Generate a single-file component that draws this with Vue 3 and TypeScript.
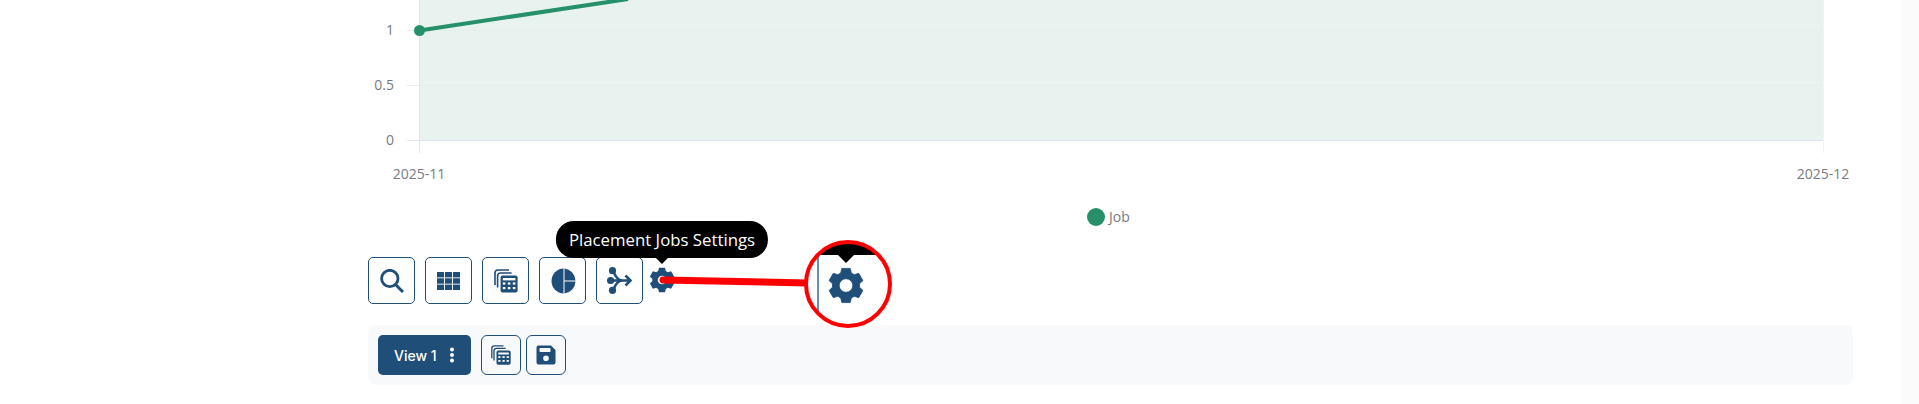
<script setup lang="ts">
function gearPath(cx: number, cy: number, outer: number, root: number, hole: number): string {
  const teeth = 6
  const pts: string[] = []
  const pt = (r: number, a: number) => `${(cx + r * Math.sin(a)).toFixed(2)} ${(cy - r * Math.cos(a)).toFixed(2)}`
  for (let i = 0; i < teeth; i++) {
    const c = (i * Math.PI * 2) / teeth
    pts.push(pt(root, c - 0.4), pt(outer, c - 0.24), pt(outer, c + 0.24), pt(root, c + 0.4))
  }
  const ring = `M${pts.join('L')}Z`
  const h = `M${cx - hole} ${cy}a${hole} ${hole} 0 1 0 ${hole * 2} 0a${hole} ${hole} 0 1 0 ${-hole * 2} 0Z`
  return ring + h
}
const smallGear = gearPath(13, 13, 12.6, 9.8, 4.3)
const bigGear = gearPath(846, 285.5, 17.6, 13.6, 6.8)
const buttons = ['search', 'grid', 'calc', 'pie', 'split']
</script>

<template>
  <div class="page">
    <main class="content">
      <section class="chart">
        <svg class="plot" width="1485" height="257" viewBox="0 0 1485 257">
          <rect x="51.5" y="0" width="1403.5" height="140.5" fill="#e8f2ee" />
          <g stroke="#e6eeeb" stroke-width="1">
            <line x1="39" x2="1455" y1="30.5" y2="30.5" />
            <line x1="39" x2="1455" y1="85.5" y2="85.5" />
          </g>
          <line x1="39" x2="1455" y1="140.5" y2="140.5" stroke="#e0e6f1" />
          <line x1="51.5" x2="51.5" y1="0" y2="153" stroke="#e0e6f1" />
          <line x1="1455.5" x2="1455.5" y1="0" y2="153" stroke="#f0f3f6" />
          <line x1="51.5" y1="30.5" x2="260" y2="-1" stroke="#25906a" stroke-width="4" />
          <circle cx="51.5" cy="30.5" r="5.5" fill="#25906a" />
          <g class="axis">
            <text x="26" y="35" text-anchor="end">1</text>
            <text x="26" y="90" text-anchor="end">0.5</text>
            <text x="26" y="145" text-anchor="end">0</text>
            <text x="51" y="179" text-anchor="middle">2025-11</text>
            <text x="1455" y="179" text-anchor="middle">2025-12</text>
            <text x="741" y="221.5">Job</text>
          </g>
          <circle cx="728" cy="217" r="9" fill="#25906a" />
        </svg>
      </section>

      <div class="toolbar">
        <button v-for="b in buttons" :key="b" class="tool" type="button">
          <svg v-if="b === 'search'" width="24" height="24" viewBox="0 0 24 24">
            <circle cx="9.8" cy="9.5" r="8.2" fill="none" stroke="#1f4e79" stroke-width="2.8" />
            <line x1="15.5" y1="15.5" x2="23" y2="23" stroke="#1f4e79" stroke-width="3" />
          </svg>
          <svg v-else-if="b === 'grid'" width="23" height="18" viewBox="0 0 23 18" fill="#1f4e79">
            <rect x="0" y="0" width="7" height="5.400" /><rect x="8" y="0" width="7" height="5.400" /><rect x="16" y="0" width="7" height="5.400" />
            <rect x="0" y="6.300" width="7" height="5.400" /><rect x="8" y="6.300" width="7" height="5.400" /><rect x="16" y="6.300" width="7" height="5.400" />
            <rect x="0" y="12.600" width="7" height="5.400" /><rect x="8" y="12.600" width="7" height="5.400" /><rect x="16" y="12.600" width="7" height="5.400" />
          </svg>
          <svg v-else-if="b === 'calc'" width="24" height="24" viewBox="0 0 24 24">
            <path d="M1 16V4a3 3 0 0 1 3-3h11" fill="none" stroke="#1f4e79" stroke-width="1.6" />
            <path d="M3.6 18.6V7a3 3 0 0 1 3-3h11" fill="none" stroke="#1f4e79" stroke-width="1.6" />
            <rect x="6.6" y="6.6" width="17" height="17" rx="2" fill="#1f4e79" />
            <rect x="8.8" y="9" width="12.6" height="2.4" fill="#fff" />
            <g fill="#fff">
              <rect x="8.8" y="13.4" width="2.6" height="2.2" /><rect x="13.8" y="13.4" width="2.6" height="2.2" /><rect x="18.8" y="13.4" width="2.6" height="2.2" />
              <rect x="8.8" y="18" width="2.6" height="2.2" /><rect x="13.8" y="18" width="2.6" height="2.2" /><rect x="18.8" y="18" width="2.6" height="2.2" />
            </g>
          </svg>
          <svg v-else-if="b === 'pie'" width="26" height="26" viewBox="0 0 26 26" fill="#1f4e79">
            <path d="M13.500 0.510V25.490A12.500 12.500 0 0 1 13.500 0.510Z" />
            <path d="M14.500 0.590A12.500 12.500 0 0 1 25.500 12.500H14.500Z" />
            <path d="M14.500 13.500H25.500A12.500 12.500 0 0 1 14.500 25.410Z" />
          </svg>
          <svg v-else width="25" height="27" viewBox="0 0 25 27" fill="none" stroke="#1f4e79" stroke-width="2.6">
            <circle cx="5.500" cy="3.700" r="3.600" fill="#1f4e79" stroke="none" />
            <circle cx="3.600" cy="13.500" r="3.600" fill="#1f4e79" stroke="none" />
            <circle cx="5.500" cy="23.300" r="3.600" fill="#1f4e79" stroke="none" />
            <path d="M6 4c3 6 5 9.500 9.500 9.500M6 23c3-6 5-9.500 9.500-9.500M4 13.500h19M18.500 8.500l5 5-5 5" />
          </svg>
        </button>
        <div class="gear-wrap">
          <svg width="26" height="26" viewBox="0 0 26 26"><path :d="smallGear" fill="#1f4e79" fill-rule="evenodd" /></svg>
          <div class="tooltip">Placement Jobs Settings</div>
        </div>
      </div>

      <div class="panel">
        <button class="view" type="button">
          <span>View 1</span>
          <svg width="6" height="16" viewBox="0 0 6 16" fill="#fff"><circle cx="3" cy="2.500" r="2" /><circle cx="3" cy="8" r="2" /><circle cx="3" cy="13.500" r="2" /></svg>
        </button>
        <button class="mini" type="button">
          <svg width="20" height="20" viewBox="0 0 24 24">
            <path d="M1 16V4a3 3 0 0 1 3-3h11" fill="none" stroke="#1f4e79" stroke-width="1.6" />
            <path d="M3.600 18.600V7a3 3 0 0 1 3-3h11" fill="none" stroke="#1f4e79" stroke-width="1.600" />
            <rect x="6.600" y="6.600" width="17" height="17" rx="2" fill="#1f4e79" />
            <rect x="8.800" y="9" width="12.600" height="2.400" fill="#f8f9fa" />
            <g fill="#f8f9fa">
              <rect x="8.800" y="13.400" width="2.600" height="2.200" /><rect x="13.800" y="13.400" width="2.600" height="2.200" /><rect x="18.800" y="13.400" width="2.600" height="2.200" />
              <rect x="8.800" y="18" width="2.600" height="2.200" /><rect x="13.800" y="18" width="2.600" height="2.200" /><rect x="18.800" y="18" width="2.600" height="2.200" />
            </g>
          </svg>
        </button>
        <button class="mini" type="button">
          <svg width="20" height="20" viewBox="0 0 20 20">
            <path d="M2.500 0.500H15L19.500 5V17.500a2 2 0 0 1-2 2H2.500a2 2 0 0 1-2-2V2.500a2 2 0 0 1 2-2Z" fill="#1f4e79" />
            <rect x="3.500" y="3" width="11" height="4" rx="0.800" fill="#f8f9fa" />
            <circle cx="10" cy="13.200" r="2.800" fill="#f8f9fa" />
          </svg>
        </button>
      </div>
    </main>
    <aside class="scroll"></aside>

    <svg class="callout" width="1919" height="404" viewBox="0 0 1919 404">
      <defs>
        <clipPath id="lens"><circle cx="848" cy="284" r="42" /></clipPath>
      </defs>
      <line x1="663" y1="280" x2="808" y2="283" stroke="#ff0000" stroke-width="7" stroke-linecap="round" />
      <circle cx="848" cy="284" r="42" fill="#fff" />
      <g clip-path="url(#lens)">
        <rect x="800" y="238" width="96" height="17" fill="#000" />
        <path d="M838 255h16l-8 8Z" fill="#000" />
        <line x1="818" y1="256" x2="818" y2="320" stroke="#6a8fb0" stroke-width="2" />
        <path :d="bigGear" fill="#1f4e79" stroke="#1f4e79" stroke-width="0.800" stroke-linejoin="round" fill-rule="evenodd" />
      </g>
      <circle cx="848" cy="284" r="42" fill="none" stroke="#ff0000" stroke-width="4" />
    </svg>
  </div>
</template>

<style scoped>
.page {
  position: relative;
  display: flex;
  width: 1919px;
  height: 404px;
  overflow: hidden;
  background: #fff;
  font-family: "Open Sans", "Liberation Sans", sans-serif;
}
.content {
  width: 1901px;
  box-sizing: border-box;
  padding: 0 48px 0 368px;
}
.scroll {
  width: 18px;
  background: #fbfbfb;
}
.chart {
  height: 257px;
}
.plot {
  display: block;
  overflow: visible;
}
.axis text {
  font-family: "Open Sans", "Liberation Sans", sans-serif;
  font-size: 14px;
  fill: #777b84;
}
.toolbar {
  display: flex;
  align-items: center;
  gap: 10px;
  height: 47px;
  margin-bottom: 21px;
}
.tool {
  display: flex;
  align-items: center;
  justify-content: center;
  width: 47px;
  height: 47px;
  padding: 0;
  box-sizing: border-box;
  background: #fff;
  border: 1.5px solid #1f4e79;
  border-radius: 5px;
}
.gear-wrap {
  position: relative;
  display: flex;
  margin-left: -4px;
  margin-top: -1px;
}
.tooltip {
  position: absolute;
  left: 13px;
  bottom: 35px;
  transform: translateX(-50%);
  height: 37px;
  padding: 0 13px;
  display: flex;
  align-items: center;
  white-space: nowrap;
  background: #000;
  color: #fff;
  font-size: 16.8px;
  border-radius: 18px;
}
.tooltip::after {
  content: "";
  position: absolute;
  left: 50%;
  top: 100%;
  margin-left: -6.5px;
  border: 6.5px solid transparent;
  border-bottom-width: 0;
  border-top-color: #000;
}
.panel {
  display: flex;
  align-items: center;
  gap: 5px;
  height: 60px;
  box-sizing: border-box;
  padding: 0 10px;
  background: #f8f9fa;
  border-radius: 8px;
}
.view {
  display: flex;
  align-items: center;
  gap: 12px;
  width: 93px;
  height: 40px;
  margin-right: 5px;
  box-sizing: border-box;
  padding: 0 0 0 16px;
  background: #1f4e79;
  border: none;
  border-radius: 5px;
  color: #fff;
  font-family: Inter, "Liberation Sans", sans-serif;
  font-size: 14px;
  font-weight: 500;
}
.mini {
  display: flex;
  align-items: center;
  justify-content: center;
  width: 40px;
  height: 40px;
  padding: 0;
  box-sizing: border-box;
  background: transparent;
  border: 1.5px solid #1f4e79;
  border-radius: 6px;
}
.callout {
  position: absolute;
  left: 0;
  top: 0;
  pointer-events: none;
}
</style>
